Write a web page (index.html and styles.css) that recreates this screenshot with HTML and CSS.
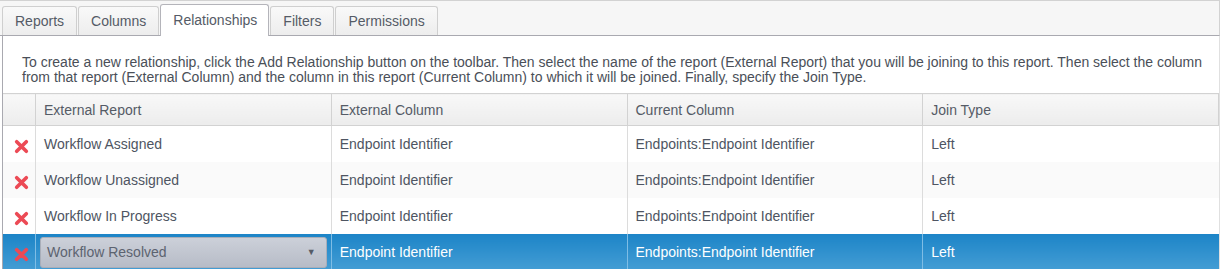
FILE: index.html
```html
<!DOCTYPE html>
<html lang="en">
<head>
    <meta charset="UTF-8">
    <title>Report Designer - Relationships</title>
    <link rel="stylesheet" href="styles.css">
</head>
<body>

<div class="tabs">
    <div class="tab">Reports</div>
    <div class="tab">Columns</div>
    <div class="tab active">Relationships</div>
    <div class="tab">Filters</div>
    <div class="tab">Permissions</div>
</div>

<div class="panel">
    <p class="help">
        To create a new relationship, click the Add Relationship button on the toolbar. Then select the name of the report (External Report) that you will be joining to this report. Then select the column from that report (External Column) and the column in this report (Current Column) to which it will be joined. Finally, specify the Join Type.
    </p>

    <table class="grid">
        <thead>
            <tr>
                <th class="icon-col"></th>
                <th>External Report</th>
                <th>External Column</th>
                <th>Current Column</th>
                <th>Join Type</th>
            </tr>
        </thead>
        <tbody>
            <tr>
                <td class="icon-col"><svg class="del" viewBox="0 0 14 14"><path d="M2.5 2.5 L11.5 11.5 M11.5 2.5 L2.5 11.5"/></svg></td>
                <td>Workflow Assigned</td>
                <td>Endpoint Identifier</td>
                <td>Endpoints:Endpoint Identifier</td>
                <td>Left</td>
            </tr>
            <tr class="alt">
                <td class="icon-col"><svg class="del" viewBox="0 0 14 14"><path d="M2.5 2.5 L11.5 11.5 M11.5 2.5 L2.5 11.5"/></svg></td>
                <td>Workflow Unassigned</td>
                <td>Endpoint Identifier</td>
                <td>Endpoints:Endpoint Identifier</td>
                <td>Left</td>
            </tr>
            <tr>
                <td class="icon-col"><svg class="del" viewBox="0 0 14 14"><path d="M2.5 2.5 L11.5 11.5 M11.5 2.5 L2.5 11.5"/></svg></td>
                <td>Workflow In Progress</td>
                <td>Endpoint Identifier</td>
                <td>Endpoints:Endpoint Identifier</td>
                <td>Left</td>
            </tr>
            <tr class="selected">
                <td class="icon-col"><svg class="del" viewBox="0 0 14 14"><path d="M2.5 2.5 L11.5 11.5 M11.5 2.5 L2.5 11.5"/></svg></td>
                <td class="edit-cell">
                    <div class="combo">
                        <span>Workflow Resolved</span>
                        <span class="arrow">&#9660;</span>
                    </div>
                </td>
                <td>Endpoint Identifier</td>
                <td>Endpoints:Endpoint Identifier</td>
                <td>Left</td>
            </tr>
        </tbody>
    </table>
</div>

</body>
</html>
```

FILE: styles.css
```css
body {
    font-family: "Liberation Sans", Arial, sans-serif;
    font-size: 14px;
    color: #4e5562;
    margin: 0;
    padding: 0;
    background: #fff;
    width: 1220px;
    height: 269px;
    overflow: hidden;
}
.tabs {
    display: flex;
    align-items: flex-end;
    height: 34px;
    padding-left: 2px;
    background: #f6f6f6;
    border-top: 1px solid #d2d2d2;
    border-bottom: 1px solid #a9a9b0;
    border-right: 1px solid #d2d2d2;
}
.tab {
    height: 28px;
    line-height: 28px;
    padding: 0 12px;
    margin-right: 1px;
    font-size: 14px;
    color: #555b66;
    background: linear-gradient(#f9f9f9, #ededed);
    border: 1px solid #cfcfcf;
    border-bottom: none;
    border-radius: 3px 3px 0 0;
}
.tab.active {
    height: 31px;
    line-height: 30px;
    margin-bottom: -1px;
    padding: 0 11px 0 12px;
    background: #fff;
    border-color: #b4b4ba;
}
.panel {
    border-left: 1px solid #a9a9b0;
    margin-left: 2px;
    border-right: 1px solid #e0e0e0;
}
.help {
    margin: 0;
    padding: 19px 2px 8px 19px;
    line-height: 15px;
    color: #4a4f58;
}
.grid {
    width: 100%;
    border-collapse: collapse;
    table-layout: fixed;
}
.grid th {
    height: 31px;
    padding: 0 8px;
    text-align: left;
    font-weight: normal;
    color: #555b66;
    background: linear-gradient(#f8f8f8, #ececec);
    border: 1px solid #d2d2d2;
    border-left-color: #d8d8d8;
}
.grid td {
    height: 36px;
    padding: 0 8px;
    border-left: 1px solid #dcdcdc;
    background: #fff;
}
.grid th.icon-col,
.grid td.icon-col {
    width: 16px;
    text-align: center;
    border-left: none;
}
.grid tr.alt td {
    background: #fafafa;
}
.grid tr.selected td {
    color: #fff;
    background: linear-gradient(#1c84c7, #449dd4);
    border-left-color: #7fbde5;
}
.grid td.edit-cell {
    padding: 0 4px;
}
.del {
    width: 15px;
    height: 15px;
    display: block;
    margin: 4px 0 0 3px;
}
.del path {
    stroke: #ec4a55;
    stroke-width: 3.4;
    stroke-linecap: round;
    fill: none;
}
.combo {
    height: 29px;
    display: flex;
    align-items: center;
    justify-content: space-between;
    padding: 0 10px 0 6px;
    color: #5c6370;
    font-size: 14px;
    background: linear-gradient(#ccd0d9, #b7bcc7);
    border: 1px solid #a9aeb9;
    border-radius: 3px;
}
.combo .arrow {
    font-size: 9px;
    color: #555b66;
}
```
